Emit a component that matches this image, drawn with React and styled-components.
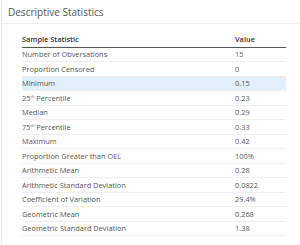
import React from "react";
import styled, { createGlobalStyle } from "styled-components";

const Global = createGlobalStyle`
  html, body { margin: 0; padding: 0; background: #fff; }
  body { font-family: "Open Sans", "Liberation Sans", sans-serif; }
`;

const Card = styled.div`
  margin-left: 1px;
  border-left: 1px solid #e6e6e6;
  height: 245px;
  box-sizing: border-box;
`;

const Header = styled.div`
  height: 24px;
  box-sizing: border-box;
  display: flex;
  align-items: center;
  padding-left: 6px;
  font-size: 10px;
  color: #555;
  border-bottom: 1px solid #f0f0f0;
`;

const Body = styled.div`
  padding: 8px 0 0 20px;
`;

const Table = styled.table`
  width: 264px;
  border-collapse: collapse;
  font-size: 7.4px;
  color: #555;
`;

const Th = styled.th`
  text-align: left;
  font-weight: 600;
  color: #333;
  height: 14.5px;
  padding: 0;
  border-bottom: 1.5px solid #555;
  width: ${(p) => p.$w || "auto"};
`;

const Tr = styled.tr`
  background: ${(p) => (p.$hl ? "#e3f0f9" : "transparent")};
`;

const Td = styled.td`
  height: 13.5px;
  padding: 0;
  border-bottom: 1px solid #eeeeee;
  vertical-align: middle;
`;

const Sup = styled.sup`
  font-size: 4px;
`;

const rows = [
  ["Number of Obversations", "15"],
  ["Proportion Censored", "0"],
  ["Minimum", "0.15", true],
  [<>25<Sup>th</Sup> Percentile</>, "0.23"],
  ["Median", "0.29"],
  [<>75<Sup>th</Sup> Percentile</>, "0.33"],
  ["Maximum", "0.42"],
  ["Proportion Greater than OEL", "100%"],
  ["Arithmetic Mean", "0.28"],
  ["Arithmetic Standard Deviation", "0.0822"],
  ["Coefficient of Variation", "29.4%"],
  ["Geometric Mean", "0.268"],
  ["Geometric Standard Deviation", "1.38"],
];

export default function App() {
  return (
    <>
      <Global />
      <Card>
        <Header>Descriptive Statistics</Header>
        <Body>
          <Table>
            <thead>
              <tr>
                <Th $w="213px">Sample Statistic</Th>
                <Th>Value</Th>
              </tr>
            </thead>
            <tbody>
              {rows.map(([k, v, hl], i) => (
                <Tr key={i} $hl={hl}>
                  <Td>{k}</Td>
                  <Td>{v}</Td>
                </Tr>
              ))}
            </tbody>
          </Table>
        </Body>
      </Card>
    </>
  );
}
